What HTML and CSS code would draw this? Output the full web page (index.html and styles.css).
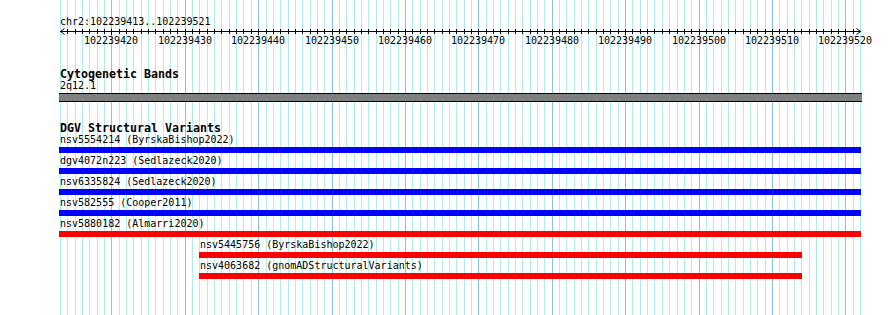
FILE: index.html
```html
<!DOCTYPE html>
<html lang="en">
<head>
<meta charset="UTF-8">
<title>chr2:102239413..102239521</title>
<link rel="stylesheet" href="styles.css">
</head>
<body>
<div class="panel">
  <svg class="grid" id="grid" width="890" height="315" shape-rendering="crispEdges"></svg>

  <svg class="ruler" id="ruler" width="890" height="50" shape-rendering="crispEdges">
    <text class="ruler-text" x="60" y="25">chr2:102239413..102239521</text>
    <line class="ruler-line" x1="60" y1="31.5" x2="861" y2="31.5"></line>
    <polyline class="ruler-line" points="64.5,28.5 60.5,31.5 64.5,34.5" fill="none" shape-rendering="auto"></polyline>
    <polyline class="ruler-line" points="856.5,28.5 860.5,31.5 856.5,34.5" fill="none" shape-rendering="auto"></polyline>
  </svg>

  <section class="track track-bands">
    <h2 class="track-title">Cytogenetic Bands</h2>
    <div class="feature">
      <div class="feature-label">2q12.1</div>
      <div class="band"></div>
    </div>
  </section>

  <section class="track track-dgv">
    <h2 class="track-title">DGV Structural Variants</h2>
    <div class="feature" style="margin-left:0; width:802px">
      <div class="feature-label">nsv5554214 (ByrskaBishop2022)</div>
      <div class="bar bar-blue"></div>
    </div>
    <div class="feature" style="margin-left:0; width:802px">
      <div class="feature-label">dgv4072n223 (Sedlazeck2020)</div>
      <div class="bar bar-blue"></div>
    </div>
    <div class="feature" style="margin-left:0; width:802px">
      <div class="feature-label">nsv6335824 (Sedlazeck2020)</div>
      <div class="bar bar-blue"></div>
    </div>
    <div class="feature" style="margin-left:0; width:802px">
      <div class="feature-label">nsv582555 (Cooper2011)</div>
      <div class="bar bar-blue"></div>
    </div>
    <div class="feature" style="margin-left:0; width:802px">
      <div class="feature-label">nsv5880182 (Almarri2020)</div>
      <div class="bar bar-red"></div>
    </div>
    <div class="feature" style="margin-left:140px; width:603px">
      <div class="feature-label">nsv5445756 (ByrskaBishop2022)</div>
      <div class="bar bar-red"></div>
    </div>
    <div class="feature" style="margin-left:140px; width:603px">
      <div class="feature-label">nsv4063682 (gnomADStructuralVariants)</div>
      <div class="bar bar-red"></div>
    </div>
  </section>
</div>

<script>
const SVG_NS = 'http://www.w3.org/2000/svg';
const START = 102239413;
const BASES = 109;

function baseX(k) {
  return Math.round(60 + k * 800 / BASES);
}

function drawGrid() {
  const grid = document.getElementById('grid');
  for (let k = 0; k <= BASES; k++) {
    const line = document.createElementNS(SVG_NS, 'rect');
    line.setAttribute('x', baseX(k));
    line.setAttribute('y', 0);
    line.setAttribute('width', 1);
    line.setAttribute('height', 315);
    line.setAttribute('class', (START + k) % 10 === 0 ? 'grid-major' : 'grid-minor');
    grid.appendChild(line);
  }
}

function drawTicks() {
  const ruler = document.getElementById('ruler');
  for (let k = 1; k < BASES; k++) {
    const pos = START + k;
    const x = baseX(k) + 0.5;
    const tick = document.createElementNS(SVG_NS, 'line');
    tick.setAttribute('x1', x);
    tick.setAttribute('x2', x);
    tick.setAttribute('y1', 29);
    tick.setAttribute('y2', pos % 10 === 0 ? 35 : 34);
    tick.setAttribute('class', 'ruler-line');
    ruler.appendChild(tick);

    if (pos % 10 === 0) {
      const label = document.createElementNS(SVG_NS, 'text');
      label.setAttribute('x', baseX(k));
      label.setAttribute('y', 44);
      label.setAttribute('class', 'ruler-text tick-label');
      label.textContent = pos;
      ruler.appendChild(label);
    }
  }
}

drawGrid();
drawTicks();
</script>
</body>
</html>
```

FILE: styles.css
```css
body {
  margin: 0;
  background-color: #fff;
  color: #000;
  font-family: "DejaVu Sans Mono", "Liberation Mono", monospace;
}
.panel {
  position: relative;
  width: 890px;
  height: 315px;
  overflow: hidden;
}
.grid {
  position: absolute;
  top: 0;
  left: 0;
}
.grid-minor {
  fill: #aeeeee;
}
.grid-major {
  fill: #88c4e6;
}
.ruler {
  position: relative;
  display: block;
}
.ruler-line {
  stroke: #000;
  stroke-width: 1;
}
.ruler-text {
  font-family: "DejaVu Sans Mono", monospace;
  font-size: 10px;
  fill: #000;
}
.tick-label {
  text-anchor: middle;
}
.track {
  position: relative;
  padding-left: 59px;
}
.track-bands {
  margin-top: 18px;
}
.track-dgv {
  margin-top: 20px;
}
.track-title {
  margin: 0;
  padding-left: 1px;
  font-size: 11.63px;
  font-weight: bold;
  line-height: 12px;
  white-space: nowrap;
}
.feature {
  margin-bottom: 2px;
}
.feature-label {
  padding-left: 1px;
  font-size: 10px;
  line-height: 12px;
  white-space: nowrap;
}
.band {
  width: 803px;
  height: 7px;
  margin-top: 1px;
  background-color: #808080;
  border-top: 1px solid #000;
  border-bottom: 1px solid #000;
}
.bar {
  height: 6px;
  margin-top: 1px;
}
.bar-blue {
  background-color: #0000ff;
}
.bar-red {
  background-color: #ff0000;
}
```
